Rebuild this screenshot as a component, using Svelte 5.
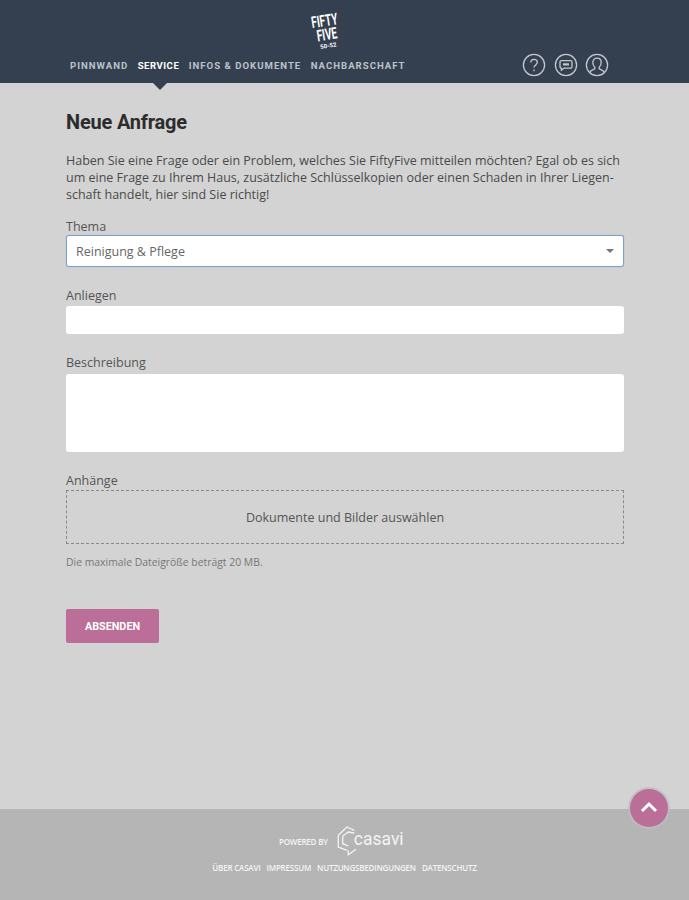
<script>
    const navItems = [
        { label: 'PINNWAND', active: false },
        { label: 'SERVICE', active: true },
        { label: 'INFOS & DOKUMENTE', active: false },
        { label: 'NACHBARSCHAFT', active: false }
    ];

    const footerLinks = ['ÜBER CASAVI', 'IMPRESSUM', 'NUTZUNGSBEDINGUNGEN', 'DATENSCHUTZ'];
</script>

<div class="page">
    <header>
        <div class="logo">
            <span>FIFTY</span>
            <span>FIVE</span>
            <small>50-52</small>
        </div>
        <div class="header-row">
            <nav>
                {#each navItems as item}
                    <a href="#top" class:active={item.active}>{item.label}</a>
                {/each}
            </nav>
            <div class="icons">
                <svg viewBox="0 0 24 24" width="24" height="24" aria-label="Hilfe">
                    <circle cx="12" cy="12" r="10.6" />
                    <path d="M8.8 9.6c0-2 1.4-3.2 3.3-3.2s3.2 1.2 3.2 2.9c0 2.6-3.3 2.6-3.3 5.3" />
                    <path d="M12 16.6v1.6" />
                </svg>
                <svg viewBox="0 0 24 24" width="24" height="24" aria-label="Nachrichten">
                    <circle cx="12" cy="12" r="10.6" />
                    <path d="M7.4 7.6h9.2a1.4 1.4 0 0 1 1.4 1.4v4.8a1.4 1.4 0 0 1-1.4 1.4H10l-2.6 2v-2A1.4 1.4 0 0 1 6 13.8V9a1.4 1.4 0 0 1 1.4-1.4z" />
                    <path d="M9 11.4h6" stroke-width="2.2" />
                </svg>
                <svg viewBox="0 0 24 24" width="24" height="24" aria-label="Profil">
                    <circle cx="12" cy="12" r="10.6" />
                    <path d="M4.6 19.6c.6-2.6 3.8-2.8 5.2-3.8v-1.6C8.4 13 7.8 11.4 7.8 9.6c0-2.8 1.8-4.4 4.2-4.4s4.2 1.6 4.2 4.4c0 1.8-.6 3.4-2 4.6v1.6c1.4 1 4.6 1.2 5.2 3.8" />
                </svg>
            </div>
        </div>
    </header>
    <div class="nav-arrow"></div>

    <main>
        <h1>Neue Anfrage</h1>
        <p class="intro">Haben Sie eine Frage oder ein Problem, welches Sie FiftyFive mitteilen möchten? Egal ob es sich um eine Frage zu Ihrem Haus, zusätzliche Schlüsselkopien oder einen Schaden in Ihrer Liegen&shy;schaft handelt, hier sind Sie richtig!</p>

        <div class="label first">Thema</div>
        <div class="select">
            <span>Reinigung &amp; Pflege</span>
            <i class="caret"></i>
        </div>

        <div class="label second">Anliegen</div>
        <div class="input"></div>

        <div class="label third">Beschreibung</div>
        <div class="textarea"></div>

        <div class="label fourth">Anhänge</div>
        <div class="dropzone">Dokumente und Bilder auswählen</div>
        <p class="hint">Die maximale Dateigröße beträgt 20 MB.</p>

        <button class="submit">ABSENDEN</button>
    </main>

    <footer>
        <div class="powered">
            <span>POWERED BY</span>
            <svg viewBox="0 0 24 30" width="24" height="30" aria-hidden="true">
                <path d="M3.3 9.3V21l8.7 3.3M3.3 9.3 12 1l7.3 3.3M7.7 10 13.3 6l6 1M7.7 10v7.7l5.6 2.3M13.3 24.3v4.4L21 23.3" />
            </svg>
            <b>casavi</b>
        </div>
        <div class="links">
            {#each footerLinks as link}
                <a href="#top">{link}</a>
            {/each}
        </div>
        <button class="to-top" aria-label="Nach oben">
            <svg viewBox="0 0 18 12" width="18" height="12">
                <path d="M2 10 9 3l7 7" />
            </svg>
        </button>
    </footer>
</div>

<style>
    :global(body) {
        margin: 0;
        background: #d3d3d3;
    }

    .page {
        width: 689px;
        height: 900px;
        overflow: hidden;
        display: flex;
        flex-direction: column;
        position: relative;
        font-family: "Open Sans", sans-serif;
        color: #444;
    }

    /* Header */
    header {
        height: 83px;
        flex: none;
        background: #34404f;
        box-sizing: border-box;
        position: relative;
        padding: 52px 0 0 70px;
    }

    .logo {
        position: absolute;
        left: 311px;
        top: 14px;
        width: 30px;
        display: flex;
        flex-direction: column;
        align-items: center;
        color: #fff;
        font-family: "Roboto", sans-serif;
        font-weight: 700;
        font-size: 16px;
        line-height: 14px;
        transform: rotate(-9deg);
    }

    .logo span {
        transform: scaleX(0.62);
    }

    .logo small {
        font-size: 6px;
        line-height: 7px;
    }

    .header-row {
        display: flex;
        justify-content: space-between;
        align-items: center;
    }

    nav {
        display: flex;
        gap: 9.5px;
        height: 26px;
        align-items: center;
    }

    nav a {
        font-family: "Roboto", sans-serif;
        font-weight: 700;
        font-size: 9.6px;
        letter-spacing: 1px;
        color: #bcc2c9;
        text-decoration: none;
        white-space: nowrap;
    }

    nav a.active {
        color: #fff;
        letter-spacing: 0.5px;
    }

    .icons {
        display: flex;
        gap: 7.5px;
        margin-right: 80px;
    }

    .icons svg {
        fill: none;
        stroke: #c3c8ce;
        stroke-width: 1.3;
    }

    .nav-arrow {
        position: absolute;
        left: 153px;
        top: 83px;
        border: 7px solid transparent;
        border-top-color: #34404f;
        border-bottom: 0;
    }

    /* Form */
    main {
        flex: 1;
        padding: 0 65px 0 66px;
        font-size: 12.5px;
    }

    h1 {
        margin: 25px 0 0;
        font-family: "Roboto", sans-serif;
        font-size: 20px;
        line-height: 29px;
        letter-spacing: -0.2px;
        font-weight: 700;
        color: #2c2c2c;
    }

    .intro {
        margin: 15px 0 0;
        line-height: 17px;
        color: #4a4a4a;
        hyphens: manual;
    }

    .label {
        line-height: 16px;
        color: #555;
    }

    .first { margin-top: 16px; }
    .second { margin-top: 21px; }
    .third { margin-top: 21px; }
    .fourth { margin-top: 21px; }

    .select {
        height: 32px;
        box-sizing: border-box;
        background: #fff;
        border: 1px solid #7f9fd0;
        border-radius: 3px;
        box-shadow: 0 0 1px #7f9fd0;
        display: flex;
        align-items: center;
        justify-content: space-between;
        padding: 0 9px;
        color: #666;
    }

    .caret {
        border: 4.5px solid transparent;
        border-top-color: #777;
        border-bottom: 0;
    }

    .input {
        height: 28px;
        margin-top: 2px;
        background: #fff;
        border-radius: 3px;
    }

    .textarea {
        height: 78px;
        margin-top: 3px;
        background: #fff;
        border-radius: 3px;
    }

    .dropzone {
        height: 54px;
        margin-top: 1px;
        box-sizing: border-box;
        border: 1px dashed #8a8a8a;
        display: flex;
        align-items: center;
        justify-content: center;
        color: #555;
    }

    .hint {
        margin: 10px 0 0;
        font-size: 10.4px;
        line-height: 16px;
        color: #777;
    }

    .submit {
        display: block;
        margin-top: 39px;
        width: 93px;
        height: 34px;
        padding: 0;
        border: 0;
        border-radius: 2px;
        background: #bb6f98;
        color: #fff;
        font-family: "Roboto", sans-serif;
        font-weight: 700;
        font-size: 10.8px;
    }

    /* Footer */
    footer {
        height: 91px;
        flex: none;
        background: #b5b5b5;
        position: relative;
        box-sizing: border-box;
        padding-top: 17px;
        color: #f4f4f4;
    }

    .powered {
        display: flex;
        align-items: center;
        height: 30px;
        padding-left: 279px;
        font-size: 8px;
        font-weight: 600;
        letter-spacing: -0.2px;
    }

    .powered svg {
        margin-left: 7px;
        fill: none;
        stroke: #f4f4f4;
        stroke-width: 1.3;
    }

    .powered b {
        font-family: "Roboto", sans-serif;
        font-size: 17.5px;
        font-weight: 400;
        letter-spacing: 0;
        margin-left: -5px;
        margin-top: -4px;
    }

    .links {
        display: flex;
        justify-content: center;
        gap: 6px;
        margin-top: 6px;
    }

    .links a {
        font-size: 8px;
        font-weight: 600;
        letter-spacing: -0.2px;
        color: #f4f4f4;
        text-decoration: none;
        white-space: nowrap;
    }

    .to-top {
        position: absolute;
        left: 630px;
        top: -20px;
        width: 38px;
        height: 38px;
        padding: 0;
        border: 0;
        border-radius: 50%;
        background: #bb6f98;
        box-shadow: 0 0 0 2px rgba(190, 190, 190, 0.8);
        display: flex;
        align-items: center;
        justify-content: center;
    }

    .to-top svg {
        fill: none;
        stroke: #fff;
        stroke-width: 3;
        margin-top: -2px;
    }
</style>
